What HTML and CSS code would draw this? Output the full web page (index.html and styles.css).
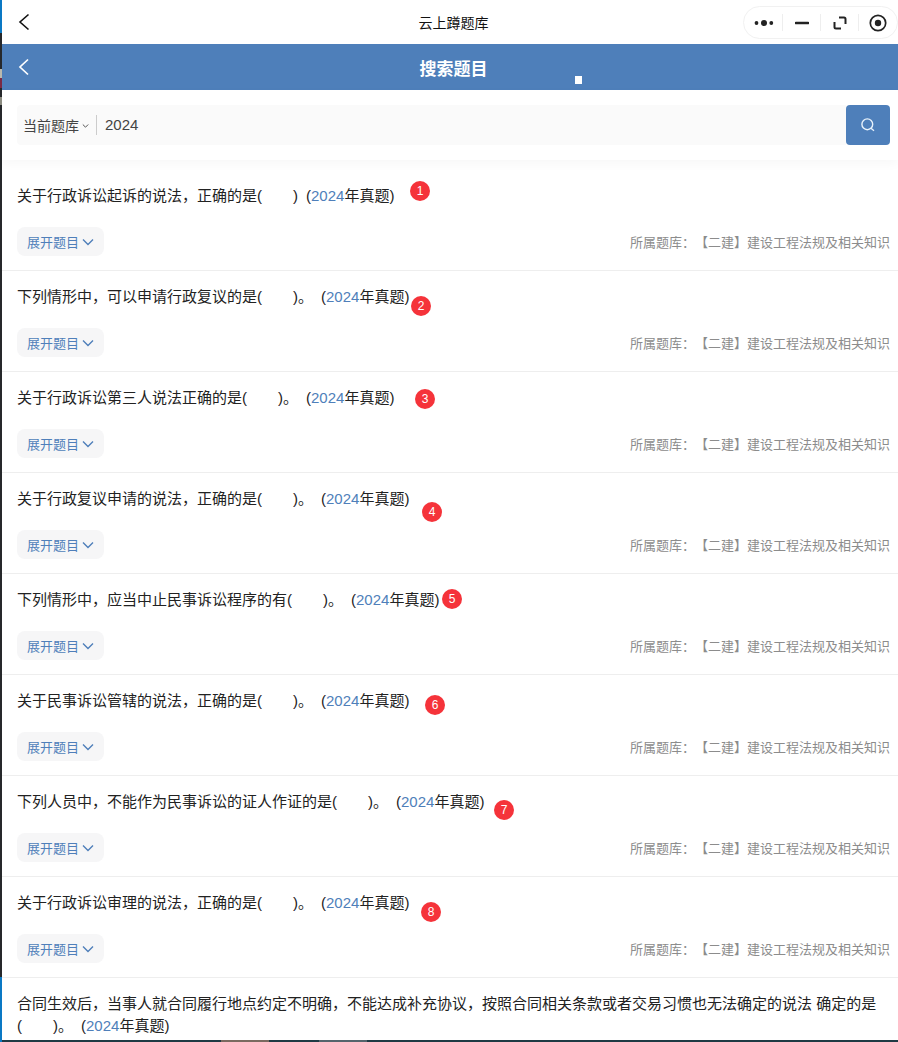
FILE: index.html
```html
<!DOCTYPE html>
<html lang="zh-CN">
<head>
  <meta charset="UTF-8">
  <title>云上蹲题库</title>
  <link rel="stylesheet" href="styles.css">
</head>
<body>

<div class="page">
  <!-- Mini program title bar -->
  <div class="titlebar">
    <svg class="title-back" width="14" height="20" viewBox="0 0 14 20"><path d="M11.500 2.500 3 10l8.500 7.500" fill="none" stroke="#111" stroke-width="1.600"/></svg>
    <span class="title-text">云上蹲题库</span>
    <div class="capsule">
      <span class="cap-item">
        <svg width="20" height="8" viewBox="0 0 20 8"><circle cx="2.500" cy="4" r="1.900" fill="#222"/><circle cx="10" cy="4" r="3" fill="#222"/><circle cx="17.300" cy="4" r="1.900" fill="#222"/></svg>
      </span>
      <span class="cap-item">
        <svg width="14" height="4" viewBox="0 0 14 4"><path d="M1 2h12" stroke="#222" stroke-width="2.600" stroke-linecap="round"/></svg>
      </span>
      <span class="cap-item">
        <svg width="14" height="14" viewBox="0 0 14 14"><path d="M6 1.500h5c1 0 1.500.5 1.500 1.500v5M8 12.500H3c-1 0-1.500-.5-1.500-1.500V6" fill="none" stroke="#222" stroke-width="2"/></svg>
      </span>
      <span class="cap-item">
        <svg width="18" height="18" viewBox="0 0 18 18"><circle cx="9" cy="9" r="7.700" fill="none" stroke="#222" stroke-width="1.700"/><circle cx="9" cy="9" r="3.200" fill="#222"/></svg>
      </span>
    </div>
  </div>

  <!-- Blue header -->
  <div class="header">
    <svg class="header-back" width="14" height="20" viewBox="0 0 14 20"><path d="M11 2.500 3 10l8 7.500" fill="none" stroke="#fff" stroke-width="1.700"/></svg>
    <h1>搜索题目</h1>
    <span class="header-dot"></span>
  </div>

  <!-- Search -->
  <div class="search">
    <div class="search-box">
      <span class="scope">当前题库</span>
      <svg class="scope-arrow" width="7" height="6" viewBox="0 0 7 6"><path d="M.8 1.500 3.500 4.200l2.700-2.700" fill="none" stroke="#555" stroke-width="1"/></svg>
      <span class="search-value">2024</span>
    </div>
    <div class="search-btn">
      <svg width="16" height="16" viewBox="0 0 16 16"><circle cx="7.300" cy="7.300" r="5.400" fill="none" stroke="#e8f2fb" stroke-width="1.400"/><path d="m11 11.300 3 2.400" stroke="#e8f2fb" stroke-width="1.400"/></svg>
    </div>
  </div>

  <ul class="list">
    <li class="item">
      <p class="question">关于行政诉讼起诉的说法，正确的是(<span class="blank"></span>)<span class="gap"></span>(<span class="year">2024</span>年真题)<span class="badge badge-1">1</span></p>
      <div class="item-foot">
        <span class="expand">展开题目<svg width="12" height="8" viewBox="0 0 12 8"><path d="m1 1.500 5 5 5-5" fill="none" stroke="#4f7fba" stroke-width="1.400"/></svg></span>
        <span class="source">所属题库：【二建】建设工程法规及相关知识</span>
      </div>
    </li>
    <li class="item">
      <p class="question">下列情形中，可以申请行政复议的是(<span class="blank"></span>)。<span class="gap"></span>(<span class="year">2024</span>年真题)<span class="badge badge-2">2</span></p>
      <div class="item-foot">
        <span class="expand">展开题目<svg width="12" height="8" viewBox="0 0 12 8"><path d="m1 1.500 5 5 5-5" fill="none" stroke="#4f7fba" stroke-width="1.400"/></svg></span>
        <span class="source">所属题库：【二建】建设工程法规及相关知识</span>
      </div>
    </li>
    <li class="item">
      <p class="question">关于行政诉讼第三人说法正确的是(<span class="blank"></span>)。<span class="gap"></span>(<span class="year">2024</span>年真题)<span class="badge badge-3">3</span></p>
      <div class="item-foot">
        <span class="expand">展开题目<svg width="12" height="8" viewBox="0 0 12 8"><path d="m1 1.500 5 5 5-5" fill="none" stroke="#4f7fba" stroke-width="1.400"/></svg></span>
        <span class="source">所属题库：【二建】建设工程法规及相关知识</span>
      </div>
    </li>
    <li class="item">
      <p class="question">关于行政复议申请的说法，正确的是(<span class="blank"></span>)。<span class="gap"></span>(<span class="year">2024</span>年真题)<span class="badge badge-4">4</span></p>
      <div class="item-foot">
        <span class="expand">展开题目<svg width="12" height="8" viewBox="0 0 12 8"><path d="m1 1.500 5 5 5-5" fill="none" stroke="#4f7fba" stroke-width="1.400"/></svg></span>
        <span class="source">所属题库：【二建】建设工程法规及相关知识</span>
      </div>
    </li>
    <li class="item">
      <p class="question">下列情形中，应当中止民事诉讼程序的有(<span class="blank"></span>)。<span class="gap"></span>(<span class="year">2024</span>年真题)<span class="badge badge-5">5</span></p>
      <div class="item-foot">
        <span class="expand">展开题目<svg width="12" height="8" viewBox="0 0 12 8"><path d="m1 1.500 5 5 5-5" fill="none" stroke="#4f7fba" stroke-width="1.400"/></svg></span>
        <span class="source">所属题库：【二建】建设工程法规及相关知识</span>
      </div>
    </li>
    <li class="item">
      <p class="question">关于民事诉讼管辖的说法，正确的是(<span class="blank"></span>)。<span class="gap"></span>(<span class="year">2024</span>年真题)<span class="badge badge-6">6</span></p>
      <div class="item-foot">
        <span class="expand">展开题目<svg width="12" height="8" viewBox="0 0 12 8"><path d="m1 1.500 5 5 5-5" fill="none" stroke="#4f7fba" stroke-width="1.400"/></svg></span>
        <span class="source">所属题库：【二建】建设工程法规及相关知识</span>
      </div>
    </li>
    <li class="item">
      <p class="question">下列人员中，不能作为民事诉讼的证人作证的是(<span class="blank"></span>)。<span class="gap"></span>(<span class="year">2024</span>年真题)<span class="badge badge-7">7</span></p>
      <div class="item-foot">
        <span class="expand">展开题目<svg width="12" height="8" viewBox="0 0 12 8"><path d="m1 1.500 5 5 5-5" fill="none" stroke="#4f7fba" stroke-width="1.400"/></svg></span>
        <span class="source">所属题库：【二建】建设工程法规及相关知识</span>
      </div>
    </li>
    <li class="item">
      <p class="question">关于行政诉讼审理的说法，正确的是(<span class="blank"></span>)。<span class="gap"></span>(<span class="year">2024</span>年真题)<span class="badge badge-8">8</span></p>
      <div class="item-foot">
        <span class="expand">展开题目<svg width="12" height="8" viewBox="0 0 12 8"><path d="m1 1.500 5 5 5-5" fill="none" stroke="#4f7fba" stroke-width="1.400"/></svg></span>
        <span class="source">所属题库：【二建】建设工程法规及相关知识</span>
      </div>
    </li>
    <li class="item item-last">
      <p class="question">合同生效后，当事人就合同履行地点约定不明确，不能达成补充协议，按照合同相关条款或者交易习惯也无法确定的说法 确定的是<br>(<span class="blank"></span>)。<span class="gap"></span>(<span class="year">2024</span>年真题)</p>
    </li>
  </ul>

  <!-- Bits of the desktop showing around the window -->
  <div class="edge-left"></div>
  <div class="edge-bottom"></div>
</div>

</body>
</html>
```

FILE: styles.css
```css
* {
  box-sizing: border-box;
}

html,
body {
  margin: 0;
  height: 100%;
  overflow: hidden;
}

body {
  background: #fff;
  color: #222;
  font-family: "Liberation Sans", "Noto Sans CJK SC", sans-serif;
}

.page {
  position: relative;
  height: 1042px;
  padding-left: 2px;
  background: #fff;
  overflow: hidden;
}

.edge-left {
  position: absolute;
  left: 0;
  top: 0;
  width: 2px;
  height: 100%;
  background: linear-gradient(to bottom,
    #0a78c4 0 33px,
    #26282b 33px 69px,
    #b9b9ae 69px 78px,
    #7a2a44 78px 88px,
    #26282b 88px 97px,
    #8b8b80 97px 105px,
    #26282b 105px 977px,
    #0a78c4 977px);
}

.edge-bottom {
  position: absolute;
  left: 2px;
  bottom: 0;
  width: 896px;
  height: 2px;
  background: linear-gradient(to right,
    #1f3a44 0 219px,
    #7a6a60 219px 267px,
    #1f3a44 267px 317px,
    #55646c 317px 365px,
    #1f3a44 365px);
}

/* Title bar */
.titlebar {
  position: relative;
  height: 44px;
  display: flex;
  align-items: center;
  justify-content: center;
}

.title-back {
  position: absolute;
  left: 15px;
  top: 12px;
}

.title-text {
  margin-left: 7px;
  font-size: 14px;
  color: #111;
}

.capsule {
  position: absolute;
  top: 6px;
  right: 0;
  width: 155px;
  height: 33px;
  padding-left: 1px;
  display: flex;
  align-items: center;
  border: 1px solid #f1f1f1;
  border-radius: 17px;
}

.cap-item {
  width: 38px;
  height: 17px;
  display: flex;
  align-items: center;
  justify-content: center;
  border-right: 1px solid #eee;
}

.cap-item:last-child {
  border-right: 0;
}

/* Blue header */
.header {
  position: relative;
  height: 46px;
  background: #4e7fba;
  display: flex;
  align-items: center;
  justify-content: center;
}

.header-back {
  position: absolute;
  left: 15px;
  top: 13px;
}

.header h1 {
  margin: 0 0 0 7px;
  font-size: 17px;
  font-weight: bold;
  color: #fff;
}

.header-dot {
  position: absolute;
  left: 573px;
  top: 32px;
  width: 7px;
  height: 8px;
  background: #fff;
}

/* Search */
.search {
  height: 70px;
  padding: 15px 8px 0 15px;
  display: flex;
  box-shadow: 0 4px 10px rgba(0, 0, 0, 0.03);
  position: relative;
}

.search-box {
  flex: 1;
  height: 40px;
  padding-left: 6px;
  display: flex;
  align-items: center;
  background: #fafafa;
  border-radius: 4px 0 0 4px;
}

.scope {
  font-size: 14px;
  color: #444;
}

.scope-arrow {
  margin: 1px 7px 0 3px;
}

.search-value {
  height: 20px;
  padding-left: 8px;
  border-left: 1px solid #ccc;
  font-size: 15px;
  line-height: 20px;
  color: #444;
}

.search-btn {
  width: 44px;
  height: 40px;
  display: flex;
  align-items: center;
  justify-content: center;
  background: #4e7fba;
  border-radius: 4px;
}

/* Question list */
.list {
  margin: 0;
  padding: 0;
  list-style-type: none;
}

.item {
  height: 101px;
  padding: 0 8px 0 15px;
  border-bottom: 1px solid #eee;
}

.item:first-child {
  height: 111px;
}

.item:first-child .question {
  padding-top: 25px;
}

.question {
  position: relative;
  margin: 0;
  padding-top: 15px;
  font-size: 15px;
  line-height: 22px;
  color: #222;
}

.blank {
  display: inline-block;
  width: 31px;
}

.gap {
  display: inline-block;
  width: 8px;
}

.year {
  color: #4f7fba;
}

.item-foot {
  margin-top: 20px;
  display: flex;
  align-items: center;
  justify-content: space-between;
}

.expand {
  height: 29px;
  padding: 0 10px;
  display: flex;
  align-items: center;
  gap: 3px;
  background: #f6f6f7;
  border-radius: 8px;
  font-size: 13px;
  color: #4f7fba;
}

.source {
  font-size: 13px;
  color: #8c8c8c;
  text-spacing-trim: space-all;
}

.item-last {
  border-bottom: 0;
}

/* Red number badges sit over the question line */
.badge {
  position: absolute;
  width: 20px;
  height: 20px;
  border-radius: 50%;
  background: #f5333a;
  color: #fff;
  font-size: 12px;
  line-height: 20px;
  text-align: center;
}

.badge-1 { left: 393px; top: 21px; }
.badge-2 { left: 394px; top: 25px; }
.badge-3 { left: 398px; top: 17px; }
.badge-4 { left: 405px; top: 29px; }
.badge-5 { left: 425px; top: 15px; }
.badge-6 { left: 408px; top: 20px; }
.badge-7 { left: 477px; top: 24px; }
.badge-8 { left: 404px; top: 25px; }
```
